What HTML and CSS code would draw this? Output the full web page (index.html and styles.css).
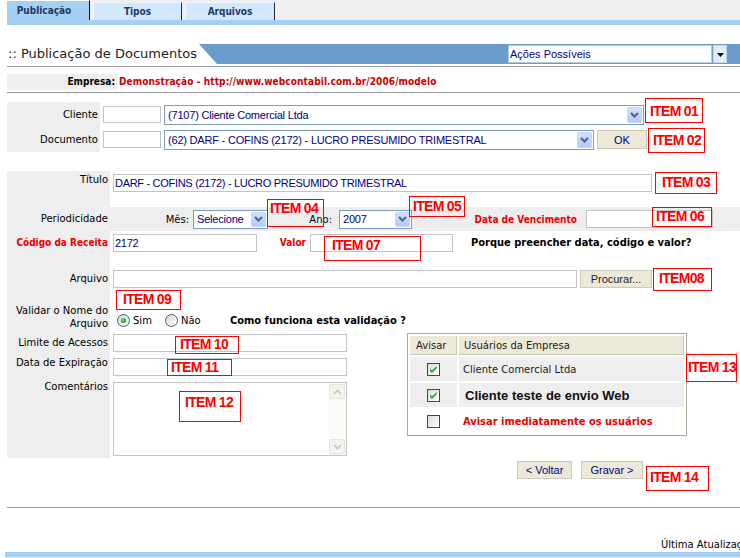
FILE: index.html
```html
<!DOCTYPE html>
<html lang="pt-BR">
<head>
<meta charset="utf-8">
<title>Publicação de Documentos</title>
<link rel="stylesheet" href="styles.css">
</head>
<body>
<div class="page">
  <nav class="tabs">
    <a class="tab tab-active">Publicação</a>
    <a class="tab tab-2">Tipos</a>
    <a class="tab tab-3">Arquivos</a>
  </nav>
  <div class="tabline"></div>

  <header class="header">
    <h1 class="title">:: Publicação de Documentos</h1>
    <div class="band">
      <div class="actions"><span class="actions-text">Ações Possíveis</span></div>
      <span class="actions-btn"><svg width="7" height="4" viewBox="0 0 7 4"><path d="M0 0h7L3.5 4z" fill="#000"/></svg></span>
    </div>
  </header>
  <div class="rule"></div>
  <div class="empresa"><span class="empresa-label">Empresa:</span><span class="empresa-value">Demonstração - http://www.webcontabil.com.br/2006/modelo</span></div>
  <div class="rule"></div>

  <section class="pick">
    <div class="pick-row">
      <div class="pick-lbl">Cliente</div>
      <input class="txt code" type="text">
      <div class="combo w-cliente"><span class="combo-text">(7107) Cliente Comercial Ltda</span><span class="combo-btn"><svg width="9" height="6" viewBox="0 0 9 6"><path d="M1 1l3.5 3.5L8 1" fill="none" stroke="#4d6185" stroke-width="2"/></svg></span></div>
    </div>
    <div class="pick-row">
      <div class="pick-lbl">Documento</div>
      <input class="txt code" type="text">
      <div class="combo w-doc"><span class="combo-text">(62) DARF - COFINS (2172) - LUCRO PRESUMIDO TRIMESTRAL</span><span class="combo-btn"><svg width="9" height="6" viewBox="0 0 9 6"><path d="M1 1l3.5 3.5L8 1" fill="none" stroke="#4d6185" stroke-width="2"/></svg></span></div>
      <button class="btn btn-ok" type="button">OK</button>
    </div>
  </section>

  <section class="doc">
    <div class="dl dl-titulo">Título</div>
    <div class="dc span pad3"><input class="txt w-titulo" type="text" value="DARF - COFINS (2172) - LUCRO PRESUMIDO TRIMESTRAL"></div>

    <div class="dl dl-period">Periodicidade</div>
    <div class="dc span period">
      <span class="plabel p-mes">Mês:</span>
      <div class="combo combo-sm w-mes"><span class="combo-text">Selecione</span><span class="combo-btn"><svg width="9" height="6" viewBox="0 0 9 6"><path d="M1 1l3.5 3.5L8 1" fill="none" stroke="#4d6185" stroke-width="2"/></svg></span></div>
      <span class="plabel p-ano">Ano:</span>
      <div class="combo combo-sm w-ano"><span class="combo-text">2007</span><span class="combo-btn"><svg width="9" height="6" viewBox="0 0 9 6"><path d="M1 1l3.5 3.5L8 1" fill="none" stroke="#4d6185" stroke-width="2"/></svg></span></div>
      <span class="plabel p-venc warn">Data de Vencimento</span>
      <input class="txt w-venc" type="text">
    </div>

    <div class="dl dl-cod warn">Código da Receita</div>
    <div class="dc span pad3 inline">
      <input class="txt w-cod" type="text" value="2172">
      <span class="plabel p-valor warn">Valor</span>
      <input class="txt w-valor" type="text">
      <span class="strong p-porque">Porque preencher data, código e valor?</span>
    </div>

    <div class="dl dl-arq">Arquivo</div>
    <div class="dc span pad4 inline">
      <input class="txt w-arq" type="text">
      <button class="btn btn-proc" type="button">Procurar...</button>
    </div>

    <div class="dl dl-validar">Validar o Nome do<br>Arquivo</div>
    <div class="dc span radios">
      <label class="opt opt-sim"><svg width="13" height="13" viewBox="0 0 13 13"><defs><linearGradient id="rg1" x1="0" y1="0" x2="1" y2="1"><stop offset="0" stop-color="#d8d8d2"/><stop offset="1" stop-color="#fff"/></linearGradient></defs><circle cx="6.5" cy="6.5" r="6" fill="url(#rg1)" stroke="#3a5f8f"/><circle cx="6.5" cy="6.5" r="2.6" fill="#3fae3f"/><circle cx="6" cy="6" r="0.9" fill="#9de09d"/></svg><span>Sim</span></label>
      <label class="opt opt-nao"><svg width="13" height="13" viewBox="0 0 13 13"><defs><linearGradient id="rg2" x1="0" y1="0" x2="1" y2="1"><stop offset="0" stop-color="#d8d8d2"/><stop offset="1" stop-color="#fff"/></linearGradient></defs><circle cx="6.5" cy="6.5" r="6" fill="url(#rg2)" stroke="#3a5f8f"/></svg><span>Não</span></label>
      <span class="strong">Como funciona esta validação ?</span>
    </div>

    <div class="dl dl-limite">Limite de Acessos</div>
    <div class="dc pad3"><input class="txt w-small" type="text"></div>

    <table class="users">
      <colgroup><col class="col-a"><col class="col-b"></colgroup>
      <tr><th class="th-a">Avisar</th><th class="th-b">Usuários da Empresa</th></tr>
      <tr class="shaded"><td class="chk"><svg width="13" height="13" viewBox="0 0 13 13"><defs><linearGradient id="cg1" x1="0" y1="0" x2="1" y2="1"><stop offset="0" stop-color="#dcdcd7"/><stop offset="1" stop-color="#fff"/></linearGradient></defs><rect x="0.5" y="0.5" width="12" height="12" fill="url(#cg1)" stroke="#1c5180"/><path d="M3 5.6l2 2L9.6 3v2.3L5 9.9 3 7.9z" fill="#21a121"/></svg></td><td class="u-name">Cliente Comercial Ltda</td></tr>
      <tr class="shaded"><td class="chk"><svg width="13" height="13" viewBox="0 0 13 13"><rect x="0.5" y="0.5" width="12" height="12" fill="url(#cg1)" stroke="#1c5180"/><path d="M3 5.6l2 2L9.6 3v2.3L5 9.9 3 7.9z" fill="#21a121"/></svg></td><td class="u-big">Cliente teste de envio Web</td></tr>
      <tr><td class="chk"><svg width="13" height="13" viewBox="0 0 13 13"><rect x="0.5" y="0.5" width="12" height="12" fill="url(#cg1)" stroke="#1c5180"/></svg></td><td class="u-warn warn">Avisar imediatamente os usuários</td></tr>
    </table>

    <div class="dl dl-exp">Data de Expiração</div>
    <div class="dc pad3"><input class="txt w-small" type="text"></div>

    <div class="dl dl-com">Comentários</div>
    <div class="dc pad4">
      <div class="memo">
        <div class="memo-area"></div>
        <div class="memo-scroll">
          <span class="sb"><svg width="9" height="6" viewBox="0 0 9 6"><path d="M1 5l3.5-3.5L8 5" fill="none" stroke="#c6c6be" stroke-width="1.6"/></svg></span>
          <span class="sb-track"></span>
          <span class="sb"><svg width="9" height="6" viewBox="0 0 9 6"><path d="M1 1l3.5 3.5L8 1" fill="none" stroke="#c6c6be" stroke-width="1.6"/></svg></span>
        </div>
      </div>
    </div>
  </section>

  <div class="buttons">
    <button class="btn btn-voltar" type="button">&lt; Voltar</button>
    <button class="btn btn-gravar" type="button">Gravar &gt;</button>
  </div>

  <div class="rule rule-foot"></div>
  <div class="footer">Última Atualização</div>
  <div class="bluebar"></div>
  <div class="endline"></div>

  <div class="item i01">ITEM 01</div>
  <div class="item i02">ITEM 02</div>
  <div class="item i03">ITEM 03</div>
  <div class="item i04">ITEM 04</div>
  <div class="item i05">ITEM 05</div>
  <div class="item i06">ITEM 06</div>
  <div class="item i07">ITEM 07</div>
  <div class="item i08">ITEM08</div>
  <div class="item i09">ITEM 09</div>
  <div class="item i10">ITEM 10</div>
  <div class="item i11">ITEM 11</div>
  <div class="item i12">ITEM 12</div>
  <div class="item i13">ITEM 13</div>
  <div class="item i14">ITEM 14</div>
</div>
</body>
</html>
```
FILE: styles.css
```css
* { box-sizing: border-box; }
html, body { margin: 0; padding: 0; background: #fff; overflow: hidden; }
body { font-family: "DejaVu Sans", Verdana, sans-serif; font-size: 10px; color: #000; }

.page { position: relative; width: 740px; height: 558px; padding-left: 7px; overflow: hidden; }

/* tabs */
.tabs { display: flex; height: 20px; background: #efefef; }
.tab { display: flex; align-items: center; justify-content: center; font-family: "DejaVu Sans Condensed", "DejaVu Sans", sans-serif; font-weight: bold; font-size: 10px; color: #1d3968; }
.tab-active { width: 83px; height: 20px; background: #a6cff4; border-top: 1px solid #fff; border-right: 1px solid #111; padding-right: 8px; }
.tab-2, .tab-3 { margin-top: 2px; height: 18px; background: #d4e8fc; border-top: 1px solid #eef6ff; border-left: 1px solid #eef6ff; border-right: 1px solid #1a2a48; }
.tab-2 { margin-left: 3px; width: 89px; }
.tab-3 { margin-left: 3px; width: 90px; }
.tabline { height: 5px; background: #a6cff4; }

/* header */
.header { display: flex; height: 20px; margin-top: 19px; }
.title { margin: 0; width: 192px; padding-left: 1px; font-size: 13px; font-weight: normal; line-height: 20px; color: #222; white-space: nowrap; }
.band { flex: 1; display: flex; justify-content: flex-end; padding: 1px 13px 1px 0; background: #6a9ccc; clip-path: polygon(0 0, 100% 0, 100% 100%, 18px 100%); }
.actions { width: 204px; height: 18px; background: #fff; border: 1px solid #b9c9dc; padding-left: 1px; }
.actions-text { font: 11px/16px "Liberation Sans", Arial, sans-serif; color: #000080; }
.actions-btn { width: 14px; height: 18px; margin-left: 1px; display: flex; align-items: flex-end; justify-content: center; padding-bottom: 5px; background: #e3edf9; border: 1px solid #c5d6ec; }

.rule { height: 1px; background: #9c9c9c; margin-top: 2px; }

/* empresa */
.empresa { display: flex; padding: 7px 0 2px; line-height: 16px; font-family: "DejaVu Sans Condensed", "DejaVu Sans", sans-serif; font-weight: bold; font-size: 10px; }
.empresa-label { width: 110px; background: #eee; text-align: right; padding-right: 2px; }
.empresa-value { margin-left: 2px; color: #cc0000; white-space: nowrap; letter-spacing: 0.1px; }
.empresa + .rule { margin-top: 0; }

/* client / document picker */
.pick { margin-top: 9px; }
.pick-row { display: flex; align-items: center; height: 25px; }
.pick-lbl { width: 93px; height: 25px; line-height: 25px; background: #eee; text-align: right; padding-right: 2px; }

.txt { height: 18px; border: 1px solid #c4c4c4; padding: 0 1px; margin: 0; font: 11px "Liberation Sans", Arial, sans-serif; letter-spacing: -0.3px; color: #000080; background: #fff; outline: none; }
.code { width: 58px; height: 17px; margin-left: 3px; }

.combo { display: flex; height: 20px; border: 1px solid #7f9db9; background: #fff; padding: 1px; margin-left: 3px; }
.combo-sm { height: 19px; margin-left: 0; }
.combo-text { flex: 1; padding-left: 2px; font: 11px/16px "Liberation Sans", Arial, sans-serif; letter-spacing: -0.2px; color: #000080; white-space: nowrap; overflow: hidden; }
.combo-sm .combo-text { line-height: 15px; }
.combo-btn { width: 15px; display: flex; align-items: center; justify-content: center; background: linear-gradient(#d3e0fc, #b4c9f6); border: 1px solid #c6d5fb; border-radius: 2px; }
.w-cliente { width: 480px; }
.w-doc { width: 430px; }

.btn { margin: 0; padding: 0; border: 1px solid #cdcabb; background: #ece9d8; font: 11px "Liberation Sans", Arial, sans-serif; color: #000080; }
.btn-ok { width: 50px; height: 19px; margin-left: 3px; }

/* document grid */
.doc { display: grid; margin-top: 19px; grid-template-columns: 103px 297px 333px; grid-template-rows: 36px 24px 35px 23px 42px 24px 23px 80px; }
.dl { grid-column: 1; background: #eee; text-align: right; padding-right: 2px; line-height: 14px; white-space: nowrap; }
.dc { grid-column: 2; padding-left: 3px; }
.dc.span { grid-column: 2 / 4; }
.pad3 { padding-top: 3px; }
.pad4 { padding-top: 4px; }
.inline { display: flex; align-items: flex-start; }

.dl-titulo { padding-top: 2px; }
.dl-period { line-height: 24px; }
.dl-cod { padding-top: 3px; line-height: 18px; }
.dl-arq { padding-top: 4px; line-height: 18px; }
.dl-validar { padding-top: 15px; line-height: 13px; }
.dl-limite { padding-top: 3px; line-height: 18px; }
.dl-exp { padding-top: 1px; }
.dl-com { padding-top: 2px; }

.warn { color: #ee0000; font-family: "DejaVu Sans Condensed", "DejaVu Sans", sans-serif; font-weight: bold; }
.strong { font-family: "DejaVu Sans Condensed", "DejaVu Sans", sans-serif; font-weight: bold; font-size: 11px; white-space: nowrap; }

.w-titulo { width: 539px; }

.period { display: flex; align-items: center; background: #eee; }
.plabel { text-align: right; white-space: nowrap; }
.p-mes { width: 80px; padding-right: 4px; }
.w-mes { width: 75px; }
.p-ano { width: 71px; padding-right: 7px; }
.w-ano { width: 73px; }
.p-venc { width: 174px; padding-right: 9px; }
.w-venc { width: 127px; }

.w-cod { width: 144px; }
.p-valor { width: 53px; padding-right: 4px; line-height: 18px; }
.w-valor { width: 143px; }
.p-porque { margin-left: 18px; line-height: 18px; }

.w-arq { width: 464px; }
.btn-proc { width: 72px; height: 18px; margin-left: 3px; color: #222; }

.radios { display: flex; align-items: center; padding-top: 24px; height: 38px; }
.opt { display: flex; align-items: center; height: 14px; }
.opt svg { display: block; }
.opt span { margin-left: 3px; }
.opt-sim { width: 52px; padding-left: 4px; }
.opt-nao { width: 65px; }

.w-small { width: 234px; }

.memo { display: flex; width: 234px; height: 74px; border: 1px solid #c4c4c4; background: #fff; }
.memo-area { flex: 1; }
.memo-scroll { width: 17px; display: flex; flex-direction: column; padding: 1px 1px 1px 0; background: #fbfbf8; }
.sb { height: 15px; display: flex; align-items: center; justify-content: center; background: #f4f4ef; border: 1px solid #e5e5dd; border-radius: 2px; }
.sb-track { flex: 1; }

/* users table */
.users { grid-column: 3; grid-row: 6 / span 3; align-self: start; margin-top: 2px; width: 280px; border: 1px solid #aca899; border-collapse: separate; border-spacing: 2px; table-layout: fixed; font-size: 10px; color: #222; }
.col-a { width: 47px; }
.col-b { width: 225px; }
.users th { height: 19px; padding: 0; background: #ece9d8; text-align: left; font-weight: normal; box-shadow: inset -1px -1px 0 #cbc7b6; }
.th-a { padding-left: 6px !important; }
.th-b { padding-left: 5px !important; }
.users td { height: 24px; padding: 0; }
.users .shaded td { background: #eee; }
.chk svg { display: block; margin: 0 auto; }
.u-name { padding-left: 4px !important; }
.u-big { padding-left: 6px !important; font: bold 13px "Liberation Sans", Arial, sans-serif; color: #111; }
.u-warn { padding-left: 4px !important; font-size: 11px; }

/* buttons */
.buttons { display: flex; gap: 9px; padding-left: 510px; margin-top: 3px; }
.btn-voltar { width: 55px; height: 18px; }
.btn-gravar { width: 62px; height: 18px; }

.rule-foot { margin-top: 28px; }
.footer { margin-top: 30px; padding-left: 654px; line-height: 14px; white-space: nowrap; }
.bluebar { height: 5px; margin-left: -2px; background: #a6cff4; }
.endline { height: 1px; margin-left: -2px; background: #ececec; }

/* annotation labels laid over the form */
.item { position: absolute; border: 1px solid #f00; background: transparent; color: #f00; font: bold 14px/14px "Liberation Sans", Arial, sans-serif; letter-spacing: -0.7px; white-space: nowrap; }
.i01 { left: 645px; top: 98px; width: 58px; height: 25px; padding: 5px 0 0 4px; }
.i02 { left: 648px; top: 128px; width: 57px; height: 25px; padding: 4px 0 0 4px; }
.i03 { left: 655px; top: 172px; width: 62px; height: 22px; padding: 2px 0 0 6px; }
.i04 { left: 267px; top: 199px; width: 57px; height: 28px; padding: 1px 0 0 2px; }
.i05 { left: 409px; top: 196px; width: 56px; height: 21px; padding: 2px 0 0 3px; }
.i06 { left: 652px; top: 207px; width: 60px; height: 20px; padding: 1px 0 0 3px; }
.i07 { left: 324px; top: 236px; width: 97px; height: 25px; padding: 1px 0 0 7px; }
.i08 { left: 653px; top: 268px; width: 59px; height: 23px; padding: 2px 0 0 5px; }
.i09 { left: 116px; top: 290px; width: 65px; height: 20px; padding: 1px 0 0 6px; }
.i10 { left: 175px; top: 336px; width: 64px; height: 18px; padding: 0 0 0 4px; }
.i11 { left: 167px; top: 359px; width: 65px; height: 17px; padding: 0 0 0 3px; }
.i12 { left: 179px; top: 391px; width: 62px; height: 31px; padding: 3px 0 0 5px; }
.i13 { left: 686px; top: 354px; width: 51px; height: 28px; padding: 5px 0 0 1px; }
.i14 { left: 646px; top: 466px; width: 63px; height: 25px; padding: 3px 0 0 3px; }
```
